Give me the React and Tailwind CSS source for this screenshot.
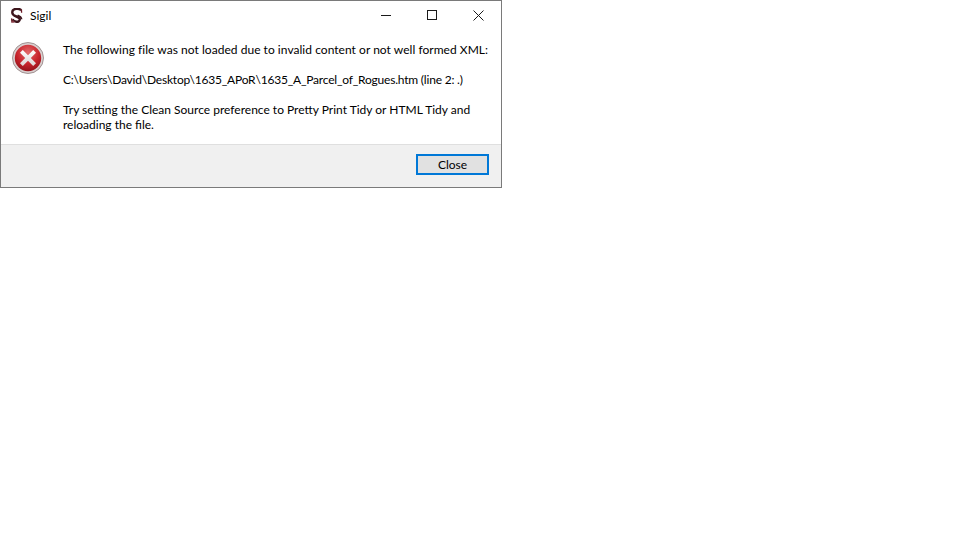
export default function App() {
  return (
    <div className="h-[540px] w-[960px] bg-white font-['Lato','Open_Sans',sans-serif] text-[12px] leading-[15px] text-black">
      <div className="flex h-[188px] w-[502px] flex-col border border-[#7a7a7a]">
        <div className="flex h-[29px] shrink-0 items-center bg-white">
          <div className="flex w-[29px] justify-center pl-[2px]">
            <svg width="14" height="16" viewBox="0 0 14 16" fill="none">
              <path d="M11.2 2.2 C9.8 1 8.2 0.7 6.6 0.8 C3.9 1 2.2 2.6 2.3 4.7 C2.4 6.8 4.2 7.7 6.4 8.5 C8.4 9.2 9.8 9.9 9.8 11.3 C9.8 12.9 8.3 13.9 6.4 13.8 C4.3 13.7 3.1 12.7 2.4 11.4" stroke="#3d161d" strokeWidth="2.4" />
              <path d="M11.4 1.2 L11.6 4.8 M1.6 10.4 L2 14.8" stroke="#6d1a26" strokeWidth="1.3" />
              <path d="M11.6 11.3 C11.6 9.2 9.6 8 7.6 7.2" stroke="#3d161d" strokeWidth="1.6" />
              <circle cx="3.2" cy="13.6" r="1.2" fill="#8a3a44" />
            </svg>
          </div>
          <span>Sigil</span>
          <div className="ml-auto flex h-full items-center pb-[1px]">
            <div className="flex w-[46px] justify-center">
              <div className="h-px w-[10px] bg-[#1a1a1a]" />
            </div>
            <div className="flex w-[46px] justify-center">
              <div className="h-[10px] w-[10px] border border-[#1a1a1a]" />
            </div>
            <div className="flex w-[46px] justify-center">
              <svg width="11" height="11" viewBox="0 0 11 11" stroke="#1a1a1a" strokeWidth="1" fill="none">
                <path d="M0.5 0.5 L10.5 10.5 M10.5 0.5 L0.5 10.5" />
              </svg>
            </div>
          </div>
        </div>
        <div className="flex min-h-0 flex-1 bg-white pl-[11px] pt-[12px]">
          <svg width="32" height="32" viewBox="0 0 32 32" className="shrink-0">
            <defs>
              <radialGradient id="r" cx="50%" cy="30%" r="75%">
                <stop offset="0%" stopColor="#e26a6a" />
                <stop offset="55%" stopColor="#c9252d" />
                <stop offset="100%" stopColor="#8c1018" />
              </radialGradient>
              <linearGradient id="x" x1="0" y1="0" x2="0" y2="1">
                <stop offset="0%" stopColor="#ffffff" />
                <stop offset="100%" stopColor="#dcd4d4" />
              </linearGradient>
            </defs>
            <circle cx="16" cy="16" r="15.5" fill="#d9cfcf" stroke="#8f7f7f" strokeWidth="0.8" />
            <circle cx="16" cy="16" r="13.2" fill="url(#r)" />
            <path d="M10.8 8 L16 13.2 L21.2 8 L24 10.8 L18.8 16 L24 21.2 L21.2 24 L16 18.8 L10.8 24 L8 21.2 L13.2 16 L8 10.8 Z" fill="url(#x)" />
          </svg>
          <div className="ml-[19px] whitespace-nowrap">
            <p className="tracking-[0.035px]">The following file was not loaded due to invalid content or not well formed XML:</p>
            <p className="mt-[15px] tracking-[-0.2px]">C:\Users\David\Desktop\1635_APoR\1635_A_Parcel_of_Rogues.htm (line 2: .)</p>
            <p className="mt-[15px]">Try setting the Clean Source preference to Pretty Print Tidy or HTML Tidy and<br />reloading the file.</p>
          </div>
        </div>
        <div className="flex h-[43px] shrink-0 justify-end border-t border-[#dfdfdf] bg-[#f0f0f0] pr-[12px] pt-[9px]">
          <button className="h-[21px] w-[73px] border-2 border-[#0078d7] bg-[#e1e1e1] text-center leading-[15px]">Close</button>
        </div>
      </div>
    </div>
  );
}
